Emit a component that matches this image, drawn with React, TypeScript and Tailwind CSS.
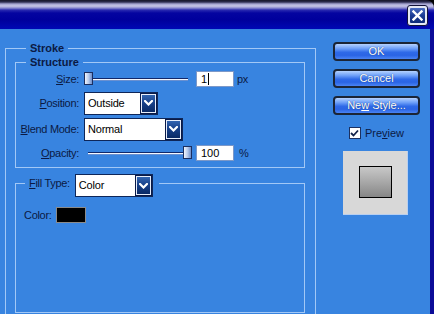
import React from "react";

function Chevron() {
  return (
    <svg width="9" height="6" viewBox="0 0 9 6">
      <path d="M1 1 L4.5 4.5 L8 1" stroke="#ffffff" strokeWidth="2.2" fill="none" strokeLinecap="square" />
    </svg>
  );
}

function Select({ value, width }: { value: string; width: string }) {
  return (
    <div className={`${width} h-[23px] flex items-stretch bg-white border border-[#0e2658]`}>
      <div className="flex-1 flex items-center pl-[3px] text-black text-[11px] tracking-[-0.2px]">{value}</div>
      <div className="w-[15px] m-[1px] border border-[#e8eefa] bg-[linear-gradient(to_bottom,#3264b0_0%,#163e86_50%,#0a2a66_100%)] outline outline-1 outline-[#0a1a48] flex items-center justify-center">
        <Chevron />
      </div>
    </div>
  );
}

function Slider({ pos }: { pos: "left" | "right" }) {
  return (
    <div className="relative w-[108px] h-[16px]">
      <div className="absolute left-[4px] right-[4px] top-[7px] h-[3px] border-t border-[#10286a] bg-[#f4f8ff] border-b border-b-[#6a90d0]" />
      <div
        className={`absolute top-[1px] w-[9px] h-[13px] border border-[#1a2e60] bg-[linear-gradient(to_right,#f0f4fc_0%,#b8cbec_50%,#6c8cc8_100%)] ${
          pos === "left" ? "left-0" : "right-0"
        }`}
      />
    </div>
  );
}

function TextInput({ value, caret }: { value: string; caret?: boolean }) {
  return (
    <div className="w-[38px] h-[16px] bg-white border border-[#7c98c8] flex items-center pl-[4px] text-[11px] text-black">
      <span>{value}</span>
      {caret && <span className="w-[1px] h-[12px] bg-black ml-[1px]" />}
    </div>
  );
}

function Button({ children }: { children: React.ReactNode }) {
  return (
    <div className="w-[87px] h-[19px] rounded-[4px] border-[2px] border-[#1b2536] bg-[linear-gradient(to_bottom,#b4d2ff_0%,#6ea0f8_30%,#2f6ae8_55%,#2a64e4_75%,#4a84f4_100%)] flex items-center justify-center text-white text-[11px] leading-none [text-shadow:0_0_1px_#10306a]">
      {children}
    </div>
  );
}

export default function App() {
  const label = "text-[11px] tracking-[-0.3px] text-[#0b1a44]";
  return (
    <div className="w-[434px] h-[314px] overflow-hidden bg-black flex flex-col font-['Liberation_Sans',Arial,sans-serif]">
      {/* Title bar */}
      <div className="h-[29px] shrink-0 rounded-tr-[8px] bg-[linear-gradient(to_bottom,#141428_0px,#2c2c50_2px,#a4a4d2_4px,#c6c6e6_6px,#8a8ad0_8px,#2a2ab0_10px,#0404a0_13px,#00009c_20px,#0008b4_29px)] flex justify-end items-start pt-[5px] pr-[6px]">
        <div className="w-[21px] h-[21px] rounded-[3px] border border-[#12123a] bg-[#e4e8f4] p-[2px]">
          <div className="w-full h-full rounded-[1px] bg-[linear-gradient(to_bottom,#4a6cc0_0%,#1c3c94_50%,#0e2a78_100%)] flex items-center justify-center">
            <svg width="11" height="11" viewBox="0 0 11 11">
              <path d="M1.5 1.5 L9.5 9.5 M9.5 1.5 L1.5 9.5" stroke="#ffffff" strokeWidth="2.4" strokeLinecap="square" />
            </svg>
          </div>
        </div>
      </div>

      {/* Body */}
      <div className="flex-1 flex bg-[#3884e0] border-r-[4px] border-[#0c0c98] overflow-hidden">
        {/* Left */}
        <div className="w-[316px] shrink-0 pl-[5px] pt-[12px]">
          <fieldset className="w-[311px] h-[320px] border border-[#a2c8f6] pl-[9px] pr-[10px]">
            <legend className="ml-[11px] px-[4px] leading-[14px] text-[11px] font-bold text-[#0b1a44]">Stroke</legend>

            {/* Structure */}
            <fieldset className="border border-[#a2c8f6] pt-[2px] pb-[6px]">
              <legend className="ml-[10px] px-[4px] leading-[14px] text-[11px] font-bold text-[#0b1a44]">Structure</legend>
              <div className="grid grid-cols-[63px_1fr] gap-x-[5px] items-center">
                <div className={`${label} text-right`}>
                  <u>S</u>ize:
                </div>
                <div className="flex items-center h-[16px]">
                  <Slider pos="left" />
                  <div className="ml-[4px]">
                    <TextInput value="1" caret />
                  </div>
                  <span className={`${label} ml-[3px]`}>px</span>
                </div>

                <div className={`${label} text-right mt-[4px]`}>
                  <u>P</u>osition:
                </div>
                <div className="mt-[4px]">
                  <Select value="Outside" width="w-[74px]" />
                </div>

                <div className={`${label} text-right mt-[3px]`}>
                  <u>B</u>lend Mode:
                </div>
                <div className="mt-[3px]">
                  <Select value="Normal" width="w-[99px]" />
                </div>

                <div className={`${label} text-right mt-[4px]`}>
                  <u>O</u>pacity:
                </div>
                <div className="flex items-center h-[16px] mt-[4px]">
                  <Slider pos="right" />
                  <div className="ml-[4px]">
                    <TextInput value="100" />
                  </div>
                  <span className={`${label} ml-[5px]`}>%</span>
                </div>
              </div>
            </fieldset>

            {/* Fill Type */}
            <fieldset className="mt-[6px] h-[139px] border border-[#a2c8f6]">
              <legend className="ml-[9px] pl-[4px] pr-[6px] h-[18px] flex items-start gap-[5px]">
                <span className={`${label} leading-[18px]`}>
                  <u>F</u>ill Type:
                </span>
                <Select value="Color" width="w-[78px]" />
              </legend>
              <div className="flex items-center pl-[8px] pt-[15px]">
                <span className={label}>Color:</span>
                <div className="ml-[4px] w-[30px] h-[16px] bg-black border border-[#8a8a8a]" />
              </div>
            </fieldset>
          </fieldset>
        </div>

        {/* Right */}
        <div className="flex-1 pl-[17px] pt-[13px]">
          <div className="flex flex-col gap-[8px]">
            <Button>OK</Button>
            <Button>Cancel</Button>
            <Button>
              Ne<u>w</u>&nbsp;Style...
            </Button>
          </div>
          <div className="w-[87px] flex items-center justify-center mt-[10px] gap-[4px]">
            <div className="w-[12px] h-[12px] bg-white border border-[#1c3060] flex items-center justify-center">
              <svg width="9" height="8" viewBox="0 0 9 8">
                <path d="M1 4 L3.5 6.5 L8 1.5" stroke="#12224a" strokeWidth="1.8" fill="none" />
              </svg>
            </div>
            <span className="text-[11px] text-[#0b1a44]">
              Pre<u>v</u>iew
            </span>
          </div>
          <div className="ml-[10px] mt-[9px] w-[65px] h-[64px] bg-[#d8d8d8] border-r border-b border-[#b8cff0] flex items-center justify-center">
            <div className="w-[33px] h-[32px] border border-black bg-[linear-gradient(to_bottom,#c8c8c8_0%,#a8a8a8_50%,#868686_100%)]" />
          </div>
        </div>
      </div>
    </div>
  );
}
